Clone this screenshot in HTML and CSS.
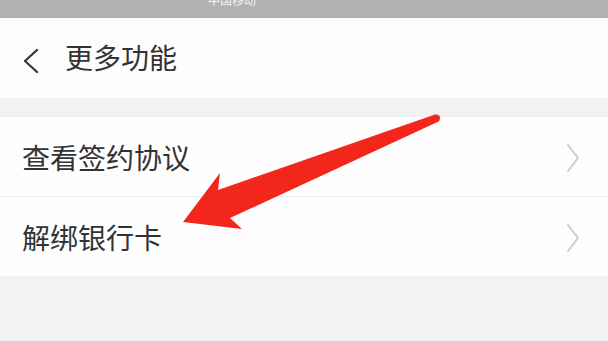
FILE: index.html
```html
<!DOCTYPE html>
<html lang="zh-CN">
<head>
<meta charset="utf-8">
<title>更多功能</title>
<link rel="stylesheet" href="styles.css">
</head>
<body>
<div class="page">
  <div class="status"><span class="carrier">中国移动</span></div>
  <header class="header">
    <svg class="back" width="18" height="24" viewBox="0 0 18 24"><path d="M15 1 L3 12 L15 23" fill="none" stroke="#333" stroke-width="2.2" stroke-linecap="round" stroke-linejoin="round"/></svg>
    <h1 class="title">更多功能</h1>
  </header>
  <div class="gap"></div>
  <ul class="list">
    <li class="row"><span class="label">查看签约协议</span><svg class="chev" width="14" height="28" viewBox="0 0 14 28"><path d="M2 1 L12 14 L2 27" fill="none" stroke="#c9c9c9" stroke-width="1.8" stroke-linecap="round" stroke-linejoin="round"/></svg></li>
    <li class="row"><span class="label">解绑银行卡</span><svg class="chev" width="14" height="28" viewBox="0 0 14 28"><path d="M2 1 L12 14 L2 27" fill="none" stroke="#c9c9c9" stroke-width="1.8" stroke-linecap="round" stroke-linejoin="round"/></svg></li>
  </ul>
  <svg class="arrow" width="608" height="341" viewBox="0 0 608 341"><path d="M435 114.5 Q440 114 440 118 Q440 121 437.5 122 L230 218 L242 229 L183 222 L220 173 L218 190 Z" fill="#f3261c"/></svg>
</div>
</body>
</html>
```
FILE: styles.css
```css
* { box-sizing: border-box; }
html, body { margin: 0; padding: 0; }
body {
  background: #f3f3f3;
  font-family: "Noto Sans CJK SC", "Noto Sans", sans-serif;
  color: #333;
}
.page {
  position: relative;
  width: 608px;
  height: 341px;
  overflow: hidden;
}
.status {
  height: 18px;
  background: #b1b1b1;
  overflow: hidden;
  padding-left: 208px;
}
.carrier {
  display: block;
  color: #f4f4f4;
  font-size: 12px;
  line-height: 12px;
  margin-top: -6px;
}
.header {
  height: 80px;
  background: #fdfdfd;
  display: flex;
  align-items: center;
  padding-left: 22px;
}
.back { margin-top: 6px; }
.title {
  margin: 0 0 2px 25px;
  font-size: 28px;
  font-weight: 400;
  line-height: 1;
  color: #333;
}
.gap { height: 19px; background: #f2f2f2; }
.list {
  list-style: none;
  margin: 0;
  padding: 0;
  background: #fefefe;
}
.row {
  height: 79px;
  display: flex;
  align-items: center;
  justify-content: space-between;
  padding: 0 28px 0 22px;
}
.row + .row { border-top: 1px solid #ececec; height: 80px; }
.label {
  font-size: 28px;
  line-height: 1;
  color: #333;
}
.chev { margin-top: 2px; }
.arrow {
  position: absolute;
  left: 0;
  top: 0;
}
```
